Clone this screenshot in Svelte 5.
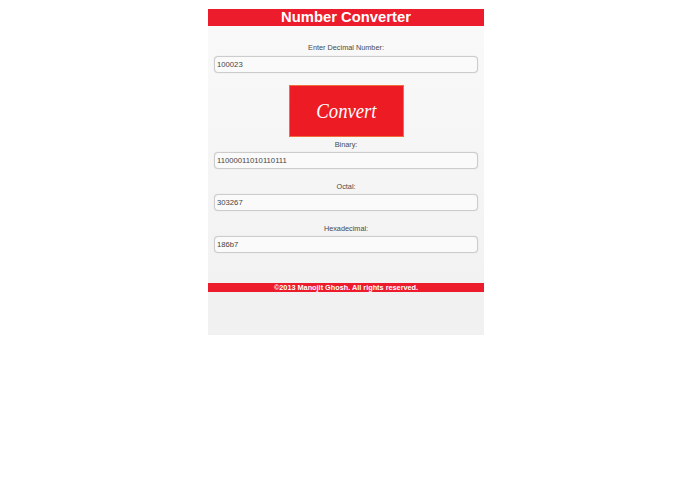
<script>
let fields = [
	{ label: "Binary:", value: "11000011010110111" },
	{ label: "Octal:", value: "303267" },
	{ label: "Hexadecimal:", value: "186b7" }
];
</script>

<div class="page">
	<header>Number Converter</header>
	<main>
		<label class="first">
			<span>Enter Decimal Number:</span>
			<input type="text" value="100023" />
		</label>
		<button><b>Convert</b></button>
		{#each fields as f}
			<label>
				<span>{f.label}</span>
				<input type="text" readonly value={f.value} />
			</label>
		{/each}
	</main>
	<footer>©2013 Manojit Ghosh. All rights reserved.</footer>
	<div class="rest"></div>
</div>

<style>
:global(body) {
	background: #fff;
	font-family: "Liberation Sans", Arial, sans-serif;
}

.page {
	width: 276px;
	margin-left: 208px;
	padding-top: 9px;
}

header {
	background: #ed1c2c;
	color: #fff;
	font-size: 14.8px;
	font-weight: bold;
	line-height: 17px;
	height: 17px;
	text-align: center;
}

main {
	background: linear-gradient(#f9f9f9, #f2f2f2);
	height: 257px;
	padding: 16px 6px 0;
	box-sizing: border-box;
	display: flex;
	flex-direction: column;
}

label {
	display: flex;
	flex-direction: column;
	gap: 2px;
	margin-bottom: 11px;
}

label span {
	padding-top: 1px;
}

label.first {
	gap: 3px;
	margin-bottom: 12px;
}

label.first span {
	padding-top: 0;
}

button + label {
	margin-top: 1px;
}

span {
	color: #4a4a4a;
	font-size: 7.3px;
	line-height: 11px;
	text-align: center;
}

input {
	appearance: none;
	box-sizing: border-box;
	width: 264px;
	height: 17px;
	padding: 0 2px;
	margin: 0;
	background: #fafafa;
	border: 1px solid #cccccc;
	border-radius: 4px;
	box-shadow: 0 0 1px #ccc;
	color: #444;
	font-family: inherit;
	font-size: 7.7px;
	outline: none;
}

button {
	align-self: center;
	flex: none;
	width: 115px;
	height: 52px;
	padding: 0;
	background: #ed1c24;
	border: 1px solid #f26d3d;
	color: #fff;
	font-family: "Liberation Serif", serif;
	font-style: italic;
	font-size: 22px;
}

button b {
	display: inline-block;
	font-weight: normal;
	transform: scaleX(0.85);
}

footer {
	background: #ed1c2c;
	color: #fff;
	font-size: 7.3px;
	font-weight: bold;
	line-height: 9px;
	height: 9px;
	text-align: center;
}

.rest {
	background: #f1f1f1;
	height: 43px;
}
</style>
